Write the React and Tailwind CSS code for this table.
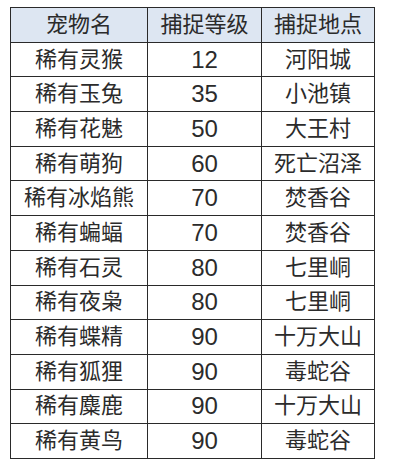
import React from 'react';

const rows = [
  ['稀有灵猴', '12', '河阳城'],
  ['稀有玉兔', '35', '小池镇'],
  ['稀有花魅', '50', '大王村'],
  ['稀有萌狗', '60', '死亡沼泽'],
  ['稀有冰焰熊', '70', '焚香谷'],
  ['稀有蝙蝠', '70', '焚香谷'],
  ['稀有石灵', '80', '七里峒'],
  ['稀有夜枭', '80', '七里峒'],
  ['稀有蝶精', '90', '十万大山'],
  ['稀有狐狸', '90', '毒蛇谷'],
  ['稀有麋鹿', '90', '十万大山'],
  ['稀有黄鸟', '90', '毒蛇谷'],
];

const cell = 'border-[1.5px] border-[#2a2a2a] text-center p-0 h-[34.7px] leading-none';

const App = () => {
  return (
    <div
      className="w-[400px] h-[467px] bg-white pt-[7px] pl-[10px] text-[#2b2b2b]"
      style={{ fontFamily: '"Liberation Sans", "Noto Sans CJK SC", sans-serif' }}
    >
      <table className="border-collapse w-[364px] table-fixed text-[22px]">
        <colgroup>
          <col className="w-[137px]" />
          <col className="w-[114px]" />
          <col className="w-[113px]" />
        </colgroup>
        <thead>
          <tr className="bg-[#dde6f2]">
            <th className={`${cell} font-normal`}>宠物名</th>
            <th className={`${cell} font-normal`}>捕捉等级</th>
            <th className={`${cell} font-normal`}>捕捉地点</th>
          </tr>
        </thead>
        <tbody>
          {rows.map(([name, lvl, place]) => (
            <tr key={name}>
              <td className={cell}>{name}</td>
              <td className={`${cell} text-[24px]`}>{lvl}</td>
              <td className={cell}>{place}</td>
            </tr>
          ))}
        </tbody>
      </table>
    </div>
  );
};

export default App;
